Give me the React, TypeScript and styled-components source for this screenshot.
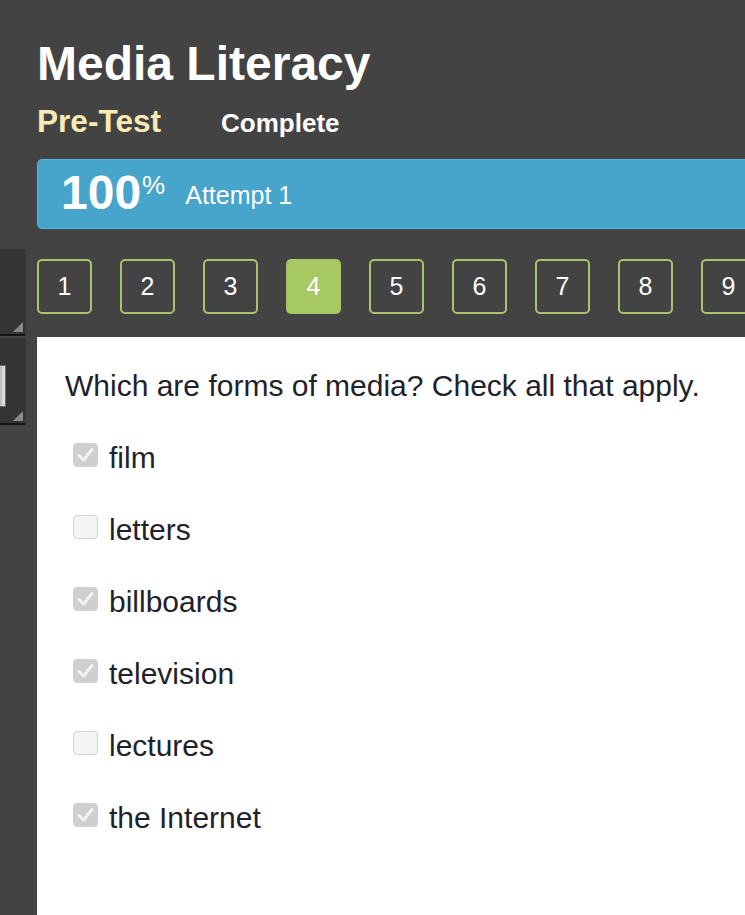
import * as React from "react";
import styled, { createGlobalStyle } from "styled-components";

const GlobalStyle = createGlobalStyle`
  html, body {
    margin: 0;
    padding: 0;
    background: #434343;
  }
  body {
    font-family: "Liberation Sans", Arial, sans-serif;
    overflow: hidden;
  }
`;

const questions = ["1", "2", "3", "4", "5", "6", "7", "8", "9"];

const options = [
  { label: "film", checked: true },
  { label: "letters", checked: false },
  { label: "billboards", checked: true },
  { label: "television", checked: true },
  { label: "lectures", checked: false },
  { label: "the Internet", checked: true },
];

const Check: React.FC<{ checked: boolean }> = ({ checked }) => (
  <Box $checked={checked}>
    {checked && (
      <svg width="25" height="24" viewBox="0 0 25 24">
        <path
          d="M6 12.5 L10.5 17 L19 6.5"
          fill="none"
          stroke="#f2f2f2"
          strokeWidth="3"
          strokeLinecap="round"
          strokeLinejoin="round"
        />
      </svg>
    )}
  </Box>
);

export default function App() {
  return (
    <>
      <GlobalStyle />
      <Page>
        <RailTop />
        <Header>
          <Title>Media Literacy</Title>
          <SubLine>
            <Lesson>Pre-Test</Lesson>
            <Status>Complete</Status>
          </SubLine>
          <ScoreBar>
            <Score>
              100<Pct>%</Pct>
            </Score>
            <Attempt>Attempt 1</Attempt>
          </ScoreBar>
        </Header>

        <Rail>
          <Stub />
        </Rail>
        <Nav>
          {questions.map((q) => (
            <NavButton key={q} $active={q === "4"}>
              {q}
            </NavButton>
          ))}
        </Nav>

        <Rail>
          <Stub $handle />
        </Rail>
        <Panel>
          <Question>Which are forms of media? Check all that apply.</Question>
          <Options>
            {options.map((o) => (
              <Option key={o.label}>
                <Check checked={o.checked} />
                <span>{o.label}</span>
              </Option>
            ))}
          </Options>
        </Panel>
      </Page>
    </>
  );
}

const Page = styled.div`
  display: grid;
  grid-template-columns: 37px 1fr;
  grid-template-rows: auto auto 1fr;
  min-height: 100vh;
  overflow: hidden;
`;

const RailTop = styled.div``;

const Rail = styled.div`
  display: flex;
  flex-direction: column;
`;

const Stub = styled.div<{ $handle?: boolean }>`
  position: relative;
  width: 25px;
  height: 85px;
  margin-top: ${(p) => (p.$handle ? "1px" : "0")};
  background: #343434;
  border-bottom: 2px solid #151515;
  box-shadow: 2px 0 0 #3c3c3c;

  &::after {
    content: "";
    position: absolute;
    right: 2px;
    bottom: 2px;
    width: 0;
    height: 0;
    border-left: 10px solid transparent;
    border-bottom: 10px solid #8a8a8a;
  }

  &::before {
    content: ${(p) => (p.$handle ? '""' : "none")};
    position: absolute;
    left: 0;
    top: 27px;
    width: 5px;
    height: 40px;
    background: linear-gradient(90deg, #b8b8b8, #e8e8e8);
    border: 1px solid #6a6a6a;
    border-left: none;
  }
`;

const Header = styled.div`
  display: flex;
  flex-direction: column;
  padding: 36px 0 20px;
  min-width: 0;
`;

const Title = styled.h1`
  margin: 0;
  font-size: 48px;
  line-height: 55px;
  font-weight: 700;
  color: #ffffff;
`;

const SubLine = styled.div`
  display: flex;
  align-items: baseline;
  gap: 60px;
  margin-top: 12px;
  height: 36px;
`;

const Lesson = styled.span`
  font-size: 31.6px;
  line-height: 36px;
  font-weight: 700;
  color: #fbe9b3;
`;

const Status = styled.span`
  font-size: 26px;
  line-height: 36px;
  font-weight: 700;
  color: #ffffff;
`;

const ScoreBar = styled.div`
  box-sizing: border-box;
  height: 70px;
  margin-top: 20px;
  margin-right: -30px;
  padding: 1px 0 0 23px;
  background: #47a4ca;
  border: 1px solid #5daccd;
  border-radius: 5px;
  box-shadow: 0 0 0 1px #3b4c54;
  color: #ffffff;
  white-space: nowrap;
  line-height: 48px;
`;

const Score = styled.span`
  font-size: 48px;
  font-weight: 700;
`;

const Pct = styled.span`
  font-size: 26px;
  font-weight: 400;
  vertical-align: 15px;
  margin-left: 1px;
`;

const Attempt = styled.span`
  font-size: 25px;
  margin-left: 20px;
  vertical-align: 5px;
`;

const Nav = styled.div`
  display: flex;
  gap: 28px;
  padding: 10px 0 23px;
  overflow: hidden;
  min-width: 0;
`;

const NavButton = styled.div<{ $active?: boolean }>`
  box-sizing: border-box;
  flex: 0 0 55px;
  height: 55px;
  display: flex;
  align-items: center;
  justify-content: center;
  border: 2px solid #a6c46c;
  border-radius: 5px;
  background: ${(p) => (p.$active ? "#a6c962" : "transparent")};
  color: #ffffff;
  font-size: 25px;
`;

const Panel = styled.div`
  background: #ffffff;
  padding: 31px 28px 40px;
  color: #1f222b;
`;

const Question = styled.p`
  margin: 0 0 36px;
  font-size: 30px;
  line-height: 36px;
  white-space: nowrap;
`;

const Options = styled.div`
  display: flex;
  flex-direction: column;
  gap: 36px;
  padding-left: 8px;
`;

const Option = styled.label`
  display: flex;
  align-items: flex-start;
  gap: 11px;
  font-size: 30px;
  line-height: 36px;
`;

const Box = styled.span<{ $checked: boolean }>`
  box-sizing: border-box;
  flex: 0 0 25px;
  width: 25px;
  height: 24px;
  margin-top: 3px;
  border-radius: 4px;
  display: flex;
  background: ${(p) => (p.$checked ? "#cfcfcf" : "#f4f4f4")};
  border: 1px solid ${(p) => (p.$checked ? "#cfcfcf" : "#d2d2d2")};

  svg {
    margin: -1px;
  }
`;
